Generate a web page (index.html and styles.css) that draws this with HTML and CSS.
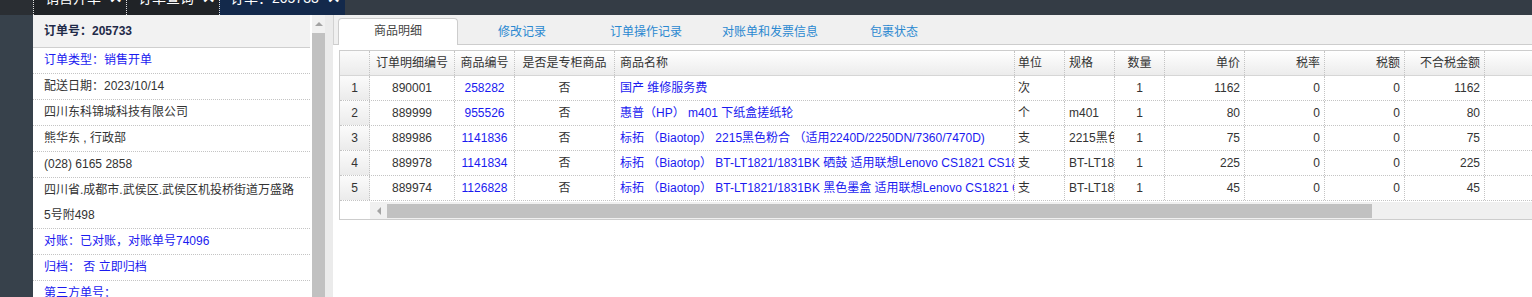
FILE: index.html
```html
<!DOCTYPE html>
<html>
	<head>
		<meta charset="UTF-8">
		<title>订单详情</title>
		<link rel="stylesheet" href="styles.css">
	</head>
	<body>
		<div class="topbar">
			<div class="top-tab"><span>销售开单<b>✕</b></span></div>
			<div class="top-tab"><span>订单查询<b>✕</b></span></div>
			<div class="top-tab top-tab-on"><span>订单：205733<b>✕</b></span></div>
		</div>
		<div class="content">
			<div class="side"></div>
			<div class="info">
				<div class="info-head">订单号：205733</div>
				<div class="info-row blue">订单类型：销售开单</div>
				<div class="info-row">配送日期：2023/10/14</div>
				<div class="info-row">四川东科锦城科技有限公司</div>
				<div class="info-row">熊华东 , 行政部</div>
				<div class="info-row">(028) 6165 2858</div>
				<div class="info-row">四川省.成都市.武侯区.武侯区机投桥街道万盛路<br>5号附498</div>
				<div class="info-row blue">对账：已对账，对账单号74096</div>
				<div class="info-row blue">归档：&nbsp;否 立即归档</div>
				<div class="info-row blue">第三方单号：</div>
			</div>
			<div class="vscroll">
				<div class="vscroll-track">
					<div class="vscroll-up"><i></i></div>
					<div class="vscroll-thumb"></div>
				</div>
			</div>
			<div class="splitter"></div>
			<div class="main">
				<div class="tabbar">
					<div class="tab tab-on">商品明细</div>
					<div class="tab">修改记录</div>
					<div class="tab">订单操作记录</div>
					<div class="tab">对账单和发票信息</div>
					<div class="tab">包裹状态</div>
				</div>
				<div class="grid">
					<div class="row head">
						<div class="cell c-no"></div>
						<div class="cell c-id">订单明细编号</div>
						<div class="cell c-sku">商品编号</div>
						<div class="cell c-flag">是否是专柜商品</div>
						<div class="cell c-name">商品名称</div>
						<div class="cell c-unit">单位</div>
						<div class="cell c-spec">规格</div>
						<div class="cell c-qty">数量</div>
						<div class="cell c-money">单价</div>
						<div class="cell c-money">税率</div>
						<div class="cell c-money">税额</div>
						<div class="cell c-money">不合税金额</div>
						<div class="fill"></div>
					</div>
					<div class="row">
						<div class="cell c-no">1</div>
						<div class="cell c-id">890001</div>
						<div class="cell c-sku">258282</div>
						<div class="cell c-flag">否</div>
						<div class="cell c-name">国产 维修服务费</div>
						<div class="cell c-unit">次</div>
						<div class="cell c-spec"></div>
						<div class="cell c-qty">1</div>
						<div class="cell c-money">1162</div>
						<div class="cell c-money">0</div>
						<div class="cell c-money">0</div>
						<div class="cell c-money">1162</div>
						<div class="fill"></div>
					</div>
					<div class="row">
						<div class="cell c-no">2</div>
						<div class="cell c-id">889999</div>
						<div class="cell c-sku">955526</div>
						<div class="cell c-flag">否</div>
						<div class="cell c-name">惠普（HP） m401 下纸盒搓纸轮</div>
						<div class="cell c-unit">个</div>
						<div class="cell c-spec">m401</div>
						<div class="cell c-qty">1</div>
						<div class="cell c-money">80</div>
						<div class="cell c-money">0</div>
						<div class="cell c-money">0</div>
						<div class="cell c-money">80</div>
						<div class="fill"></div>
					</div>
					<div class="row">
						<div class="cell c-no">3</div>
						<div class="cell c-id">889986</div>
						<div class="cell c-sku">1141836</div>
						<div class="cell c-flag">否</div>
						<div class="cell c-name">标拓 （Biaotop） 2215黑色粉合 （适用2240D/2250DN/7360/7470D)</div>
						<div class="cell c-unit">支</div>
						<div class="cell c-spec">2215黑色粉合</div>
						<div class="cell c-qty">1</div>
						<div class="cell c-money">75</div>
						<div class="cell c-money">0</div>
						<div class="cell c-money">0</div>
						<div class="cell c-money">75</div>
						<div class="fill"></div>
					</div>
					<div class="row">
						<div class="cell c-no">4</div>
						<div class="cell c-id">889978</div>
						<div class="cell c-sku">1141834</div>
						<div class="cell c-flag">否</div>
						<div class="cell c-name">标拓 （Biaotop） BT-LT1821/1831BK 硒鼓 适用联想Lenovo CS1821 CS1831</div>
						<div class="cell c-unit">支</div>
						<div class="cell c-spec">BT-LT1821/1831BK</div>
						<div class="cell c-qty">1</div>
						<div class="cell c-money">225</div>
						<div class="cell c-money">0</div>
						<div class="cell c-money">0</div>
						<div class="cell c-money">225</div>
						<div class="fill"></div>
					</div>
					<div class="row">
						<div class="cell c-no">5</div>
						<div class="cell c-id">889974</div>
						<div class="cell c-sku">1126828</div>
						<div class="cell c-flag">否</div>
						<div class="cell c-name">标拓 （Biaotop） BT-LT1821/1831BK 黑色墨盒 适用联想Lenovo CS1821 CS1831</div>
						<div class="cell c-unit">支</div>
						<div class="cell c-spec">BT-LT1821/1831BK</div>
						<div class="cell c-qty">1</div>
						<div class="cell c-money">45</div>
						<div class="cell c-money">0</div>
						<div class="cell c-money">0</div>
						<div class="cell c-money">45</div>
						<div class="fill"></div>
					</div>
					<div class="hscroll">
						<div class="hscroll-pad"></div>
						<div class="hscroll-track">
							<div class="hscroll-left"><i></i></div>
							<div class="hscroll-thumb"></div>
						</div>
					</div>
				</div>
			</div>
		</div>
	</body>
</html>
```

FILE: styles.css
```css
*{
	margin: 0;
	padding: 0;
	box-sizing: border-box;
}
body{
	width: 1532px;
	height: 297px;
	overflow: hidden;
	background-color: #fff;
	font-family: "Liberation Sans", "Noto Sans CJK SC", sans-serif;
	font-size: 12px;
	color: #333;
}
/*顶部标签*/
.topbar{
	height: 15px;
	display: flex;
	padding-left: 33px;
	background: linear-gradient(to right, #2a2e33 33px, #343c45 33px);
	overflow: hidden;
}
.top-tab{
	width: 93px;
	height: 15px;
	overflow: hidden;
	border-left: 1px dotted #e0e0e0;
	background-color: #202327;
	color: #fff;
	font-size: 14px;
}
.top-tab span{
	display: block;
	margin-top: -10px;
	line-height: 16px;
	padding-left: 11px;
	white-space: nowrap;
}
.top-tab b{
	font-size: 16px;
	margin-left: 8px;
}
.top-tab-on{
	width: 126px;
	background-color: #13294b;
}
.top-tab-on span{
	padding-left: 10px;
}
.content{
	display: flex;
	height: 282px;
}
.side{
	width: 33px;
	background-color: #37414b;
}
/*左侧订单信息*/
.info{
	width: 277px;
	background-color: #fff;
	overflow: hidden;
}
.info-head{
	height: 33px;
	line-height: 32px;
	padding-left: 11px;
	background-color: #f2f2f2;
	border-bottom: 1px solid #cfcfcf;
	font-weight: bold;
	color: #1f2a48;
}
.info-row{
	line-height: 25px;
	padding-left: 11px;
	border-bottom: 1px dotted #c4c4c4;
	white-space: nowrap;
}
.blue{
	color: #1a1af0;
}
.vscroll{
	width: 15px;
	padding-left: 2px;
	background-color: #fff;
}
.vscroll-track{
	height: 100%;
	background-color: #f1f1f1;
	display: flex;
	flex-direction: column;
}
.vscroll-up{
	height: 18px;
	display: flex;
	align-items: center;
	justify-content: center;
}
.vscroll-up i{
	border-left: 4px solid transparent;
	border-right: 4px solid transparent;
	border-bottom: 4px solid #a3a3a3;
}
.vscroll-thumb{
	flex: 1;
	background-color: #c1c1c1;
}
.splitter{
	width: 8px;
	background-color: #ebebeb;
}
/*右侧内容*/
.main{
	flex: 1;
	min-width: 0;
}
.tabbar{
	height: 30px;
	display: flex;
	align-items: flex-end;
	gap: 4px;
	padding-left: 4px;
	background-color: #f0f0f0;
	border-left: 1px solid #d2d2d2;
	border-bottom: 1px solid #cdcdcd;
}
.tab{
	width: 120px;
	height: 26px;
	line-height: 25px;
	text-align: center;
	color: #2a88d0;
	border: 1px solid transparent;
	border-bottom: none;
	margin-bottom: -1px;
}
.tab-on{
	height: 27px;
	background-color: #fff;
	border-color: #cdcdcd;
	border-radius: 4px 4px 0 0;
	color: #444;
}
.grid{
	margin: 5px 0 0 6px;
	border: 1px solid #cdcdcd;
	border-right: none;
}
.row{
	display: flex;
	border-bottom: 1px dotted #c4c4c4;
}
.head{
	background: linear-gradient(#ffffff, #ececec);
	border-bottom: 1px solid #d6d6d6;
}
.cell{
	flex: none;
	height: 24px;
	line-height: 24px;
	padding: 0 4px;
	border-right: 1px dotted #c4c4c4;
	white-space: nowrap;
	overflow: hidden;
}
.fill{
	flex: 1;
}
.c-no{
	width: 30px;
	text-align: center;
	background: linear-gradient(#fbfbfb, #ebebeb);
}
.c-id{
	width: 85px;
	text-align: center;
}
.c-sku{
	width: 60px;
	text-align: center;
	color: #1a1af0;
}
.c-flag{
	width: 100px;
	text-align: center;
}
.c-name{
	width: 400px;
	padding: 0 0 0 5px;
	color: #1a1af0;
}
.c-unit{
	width: 50px;
	padding: 0 0 0 3px;
}
.c-spec{
	width: 50px;
	padding: 0 0 0 4px;
}
.c-qty{
	width: 50px;
	text-align: center;
}
.c-money{
	width: 80px;
	text-align: right;
}
.head .cell{
	color: #333;
}
.hscroll{
	display: flex;
	height: 18px;
}
.hscroll-pad{
	width: 30px;
	background-color: #fff;
}
.hscroll-track{
	flex: 1;
	display: flex;
	align-items: center;
	background-color: #f0f0f0;
	margin-top: 1px;
}
.hscroll-left{
	width: 17px;
	height: 100%;
	display: flex;
	align-items: center;
	justify-content: center;
}
.hscroll-left i{
	border-top: 4px solid transparent;
	border-bottom: 4px solid transparent;
	border-right: 4px solid #a3a3a3;
}
.hscroll-thumb{
	width: 985px;
	height: 14px;
	background-color: #c1c1c1;
}
```
